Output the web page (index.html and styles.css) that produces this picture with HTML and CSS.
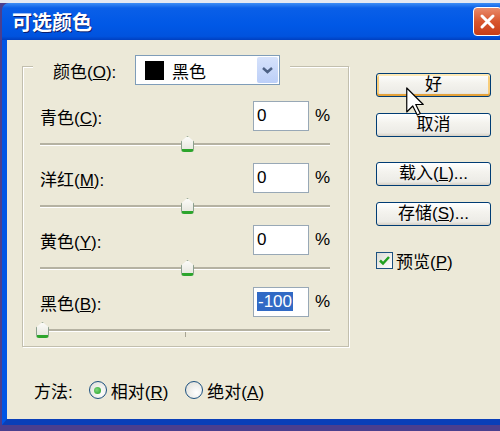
FILE: index.html
```html
<!DOCTYPE html>
<html lang="zh-CN">
<head>
    <meta charset="UTF-8">
    <meta name="viewport" content="width=device-width, initial-scale=1.0">
    <title>可选颜色</title>
    <link rel="stylesheet" href="styles.css">
</head>
<body>
    <div class="window">
        <div class="titlebar">
            <span class="title">可选颜色</span>
            <span class="close">
                <svg width="27" height="27" viewBox="0 0 27 27"><path d="M8 8 L19 19 M19 8 L8 19" stroke="#fff" stroke-width="3" stroke-linecap="round"/></svg>
            </span>
        </div>
        <div class="content">
            <div class="main">
                <div class="group">
                    <div class="group-head">
                        <span class="head-label">颜色(<u>O</u>):</span>
                        <div class="select">
                            <span class="swatch"></span>
                            <span class="select-text">黑色</span>
                            <span class="select-btn">
                                <svg width="21" height="26" viewBox="0 0 21 26"><polyline points="6,11 10.5,15 15,11" fill="none" stroke="#4d6185" stroke-width="2.5"/></svg>
                            </span>
                        </div>
                    </div>
                    <div class="rows">
                        <div class="block">
                            <div class="row">
                                <span class="label">青色(<u>C</u>):</span>
                                <div class="field">0</div>
                                <span class="pct">%</span>
                            </div>
                            <div class="slider">
                                <span class="track"></span>
                                <span class="tick"></span>
                                <span class="thumb" style="left: calc(50% - 4px)"></span>
                            </div>
                        </div>
                        <div class="block">
                            <div class="row">
                                <span class="label">洋红(<u>M</u>):</span>
                                <div class="field">0</div>
                                <span class="pct">%</span>
                            </div>
                            <div class="slider">
                                <span class="track"></span>
                                <span class="tick"></span>
                                <span class="thumb" style="left: calc(50% - 4px)"></span>
                            </div>
                        </div>
                        <div class="block">
                            <div class="row">
                                <span class="label">黄色(<u>Y</u>):</span>
                                <div class="field">0</div>
                                <span class="pct">%</span>
                            </div>
                            <div class="slider">
                                <span class="track"></span>
                                <span class="tick"></span>
                                <span class="thumb" style="left: calc(50% - 4px)"></span>
                            </div>
                        </div>
                        <div class="block">
                            <div class="row">
                                <span class="label">黑色(<u>B</u>):</span>
                                <div class="field"><span class="selected">-100</span></div>
                                <span class="pct">%</span>
                            </div>
                            <div class="slider">
                                <span class="track"></span>
                                <span class="tick"></span>
                                <span class="thumb" style="left: calc(0% - 4px)"></span>
                            </div>
                        </div>
                    </div>
                </div>

                <div class="side">
                    <button class="btn default">好</button>
                    <button class="btn">取消</button>
                    <button class="btn gap-big">载入(<u>L</u>)...</button>
                    <button class="btn">存储(<u>S</u>)...</button>
                    <label class="check">
                        <span class="box">
                            <svg width="15" height="15" viewBox="0 0 15 15"><polyline points="3,7.5 6,10.5 12,4" fill="none" stroke="#21a121" stroke-width="2.5"/></svg>
                        </span>
                        <span>预览(<u>P</u>)</span>
                    </label>
                </div>
            </div>

            <div class="method">
                <span class="method-label">方法:</span>
                <span class="radio on"><span class="dot"></span></span>
                <span class="radio-text">相对(<u>R</u>)</span>
                <span class="radio"></span>
                <span class="radio-text">绝对(<u>A</u>)</span>
            </div>
        </div>
    </div>

    <svg class="cursor" width="18" height="29" viewBox="0 0 12 19">
        <polygon points="0.5,0.5 0.5,16.5 4.5,12.5 7.5,18.5 9.5,17.5 6.5,11.5 11.5,11.5" fill="#fff" stroke="#000" stroke-width="0.8" stroke-linejoin="round"/>
    </svg>
</body>
</html>
```

FILE: styles.css
```css
body {
    margin: 0;
    width: 500px;
    height: 431px;
    overflow: hidden;
    position: relative;
    background: linear-gradient(to bottom, #e4e8f2 0, #e4e8f2 3px, #4b3f8e 3px);
    font-family: "Liberation Sans", "Noto Sans CJK SC", sans-serif;
    font-size: 17px;
    color: #000;
}
.window {
    margin: 3px 0 0 2px;
    width: 520px;
}
.titlebar {
    height: 37px;
    border-radius: 7px 7px 0 0;
    background: linear-gradient(to bottom, #3d8df5 0, #0a5fe8 5px, #0058e6 60%, #0053de 90%, #003fc0 100%);
    display: flex;
    align-items: center;
    justify-content: space-between;
    padding: 0 20px 0 10px;
}
.title {
    color: #fff;
    font-family: "Noto Sans CJK SC", sans-serif;
    font-weight: bold;
    font-size: 20px;
    text-shadow: 1px 1px 0 #0a1e6e;
}
.close {
    width: 27px;
    height: 27px;
    border: 1px solid #fff;
    border-radius: 4px;
    background: linear-gradient(to bottom, #e98a6a, #d8562e 50%, #c73d18);
    display: flex;
}
.content {
    height: 385px;
    box-sizing: border-box;
    background: #ece9d8;
    border-left: 5px solid #0055e5;
    border-bottom: 6px solid #0a3fb8;
    padding: 26px 0 0 15px;
}
.main {
    display: flex;
    align-items: flex-start;
}
.group {
    width: 325px;
    border: 1px solid #c2bfae;
    box-shadow: 1px 1px 0 #fff, inset 1px 1px 0 #fff;
}
.group-head {
    margin: -12px 0 0 10px;
    padding: 0 10px 0 20px;
    width: fit-content;
    background: #ece9d8;
    display: flex;
    align-items: center;
}
.head-label {
    width: 82px;
}
.select {
    width: 145px;
    height: 30px;
    box-sizing: border-box;
    border: 1px solid #7f9db9;
    background: #fff;
    display: flex;
    align-items: center;
    padding: 0 1px 0 9px;
}
.swatch {
    width: 19px;
    height: 19px;
    background: #000;
}
.select-text {
    margin-left: 8px;
    flex: 1;
}
.select-btn {
    width: 21px;
    height: 26px;
    border-radius: 2px;
    background: linear-gradient(to bottom, #d6e2fb, #bccff8);
    display: flex;
}
.rows {
    padding: 16px 18px 8px 17px;
}
.block {
    margin-bottom: 11px;
}
.block:last-child {
    margin-bottom: 0;
}
.row {
    display: flex;
    align-items: center;
    height: 30px;
}
.label {
    flex: 1;
}
.field {
    width: 56px;
    height: 30px;
    box-sizing: border-box;
    border: 1px solid #98a8b6;
    background: #fff;
    padding: 3px 0 0 3px;
    line-height: 22px;
}
.selected {
    background: #316ac5;
    color: #fff;
    padding: 0 1px;
}
.pct {
    width: 15px;
    margin-left: 6px;
}
.slider {
    position: relative;
    height: 16px;
    margin-top: 5px;
}
.track {
    position: absolute;
    left: 0;
    right: 0;
    top: 7px;
    height: 2px;
    background: #b5b2a2;
    border-bottom: 1px solid #fff;
}
.tick {
    position: absolute;
    left: 50%;
    top: 10px;
    width: 1px;
    height: 5px;
    background: #a8a594;
}
.thumb {
    position: absolute;
    top: 0;
    width: 13px;
    height: 16px;
    box-sizing: border-box;
    background: linear-gradient(to bottom, #fbfbf8, #e8e8e0);
    border: 1px solid #8ca08e;
    border-bottom: 3px solid #2ca52c;
    clip-path: polygon(50% 0, 100% 35%, 100% 100%, 0 100%, 0 35%);
    border-radius: 0 0 3px 3px;
}
.side {
    margin: 7px 0 0 27px;
    display: flex;
    flex-direction: column;
    align-items: flex-start;
}
.btn {
    width: 115px;
    height: 24px;
    margin-bottom: 16px;
    border: 1px solid #003c74;
    border-radius: 3px;
    background: linear-gradient(to bottom, #fff, #f4f3ee 40%, #ecebe6 85%, #d6d0c5);
    font-family: "Liberation Sans", "Noto Sans CJK SC", sans-serif;
    font-size: 17px;
    line-height: 20px;
    padding: 0;
    color: #000;
}
.btn.default {
    box-shadow: inset 0 2px 0 #ffe9b5, inset 0 -2px 0 #e5a23a, inset 2px 0 0 #f8cd7a, inset -2px 0 0 #f8cd7a;
}
.btn.gap-big {
    margin-top: 9px;
}
.check {
    margin-top: 6px;
    display: flex;
    align-items: center;
    gap: 3px;
}
.box {
    width: 17px;
    height: 17px;
    box-sizing: border-box;
    border: 1px solid #1c5180;
    background: linear-gradient(135deg, #dcdcd5, #fff);
    display: flex;
    align-items: center;
    justify-content: center;
}
.method {
    margin: 34px 0 0 12px;
    display: flex;
    align-items: center;
    height: 18px;
}
.method-label {
    margin-right: 16px;
}
.radio {
    width: 18px;
    height: 18px;
    box-sizing: border-box;
    border: 1px solid #1c5180;
    border-radius: 50%;
    background: radial-gradient(circle at 65% 65%, #fff, #dcdcd5);
    display: flex;
    align-items: center;
    justify-content: center;
}
.dot {
    width: 7px;
    height: 7px;
    border-radius: 50%;
    background: radial-gradient(circle at 40% 40%, #7fd67f, #21a121);
}
.radio-text {
    margin: 0 17px 0 4px;
}
.cursor {
    position: absolute;
    left: 406px;
    top: 87px;
}
```
